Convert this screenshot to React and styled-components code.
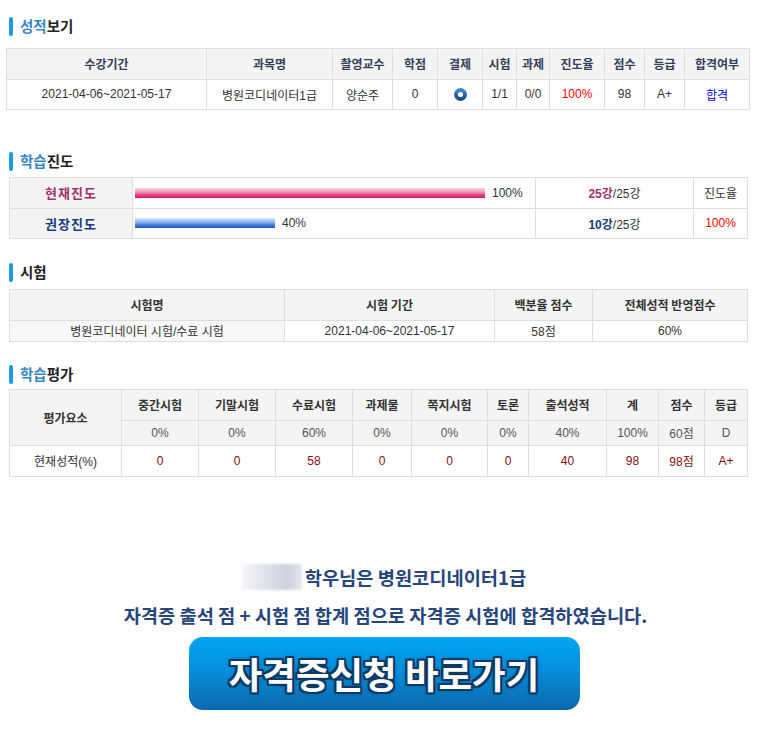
import styled, { createGlobalStyle } from "styled-components";

const GlobalStyle = createGlobalStyle`
    body {
        margin: 0;
        background: #fff;
        font-family: "Liberation Sans", "Noto Sans CJK KR", sans-serif;
        color: #333;
    }
`;

const Page = styled.div`
    width: 764px;
    padding-bottom: 29px;
`;

const Heading = styled.h3`
    display: flex;
    align-items: center;
    gap: 7px;
    height: 20px;
    margin: ${p => p.$mt}px 0 ${p => p.$mb}px 9px;
    font-family: "Noto Sans CJK KR", sans-serif;
    font-size: 14.5px;
    font-weight: bold;
    line-height: 20px;
    color: #222;

    &::before {
        content: "";
        width: 4px;
        height: 19px;
        border-radius: 2px;
        background: #1e9be6;
    }
`;

const Accent = styled.span`
    color: #3586c6;
`;

const Table = styled.table`
    border-collapse: collapse;
    table-layout: fixed;
    width: ${p => p.$w}px;
    margin-left: ${p => p.$ml}px;
    font-size: 12px;
`;

const Th = styled.th`
    height: ${p => p.$h || 29.5}px;
    padding: 0;
    border: 1px solid #dedede;
    background: #f4f4f4;
    font-family: "Noto Sans CJK KR", sans-serif;
    font-weight: bold;
    font-size: ${p => p.$size || 12}px;
    letter-spacing: ${p => p.$ls || 0}px;
    color: ${p => p.$color || "#333"};
    text-align: center;
`;

const Td = styled.td`
    height: ${p => p.$h || 29.5}px;
    padding: 0;
    border: 1px solid #dedede;
    background: ${p => p.$bg || "#fff"};
    color: ${p => p.$color || "#333"};
    text-align: center;
    white-space: nowrap;
`;

const Ring = () => (
    <svg width="13" height="13" viewBox="0 0 13 13" style={{ verticalAlign: "middle" }}>
        <defs>
            <linearGradient id="ring" x1="0" y1="0" x2="0" y2="1">
                <stop offset="0" stopColor="#3d86cf" />
                <stop offset="1" stopColor="#1a4b8c" />
            </linearGradient>
        </defs>
        <circle cx="6.5" cy="6.5" r="4.5" fill="#fff" stroke="url(#ring)" strokeWidth="4" />
    </svg>
);

const BarWrap = styled.div`
    display: flex;
    align-items: center;
    gap: 7px;
    padding-left: 2px;
`;

const Bar = styled.div`
    height: 10px;
    background: ${p => p.$kind === "pink"
        ? "linear-gradient(#fdd6df, #f294b5 40%, #e0347a 75%, #d81b6a)"
        : "linear-gradient(#dbe9fc, #8cb6ef 40%, #3f74dc 75%, #2556c9)"};
`;

const Lesson = styled.b`
    color: ${p => p.$color};
    font-weight: bold;
`;

const Notice = styled.div`
    display: flex;
    flex-direction: column;
    align-items: center;
    margin-top: 87px;
    padding-left: 4px;
    font-family: "Noto Sans CJK KR", sans-serif;
    font-weight: bold;
    font-size: 18.7px;
    color: #27467d;
`;

const NameLine = styled.div`
    display: flex;
    align-items: center;
    gap: 3px;
    height: 26px;
    line-height: 26px;
`;

const Masked = styled.span`
    width: 60px;
    height: 26px;
    background: linear-gradient(90deg, #f4f5f8, #d7dbe5 55%, #ccd1dd 75%, #e4e7ee);
    filter: blur(1px);
`;

const Message = styled.div`
    margin-top: 12px;
    padding-left: 3px;
    line-height: 26px;
`;

const ApplyButton = styled.a`
    display: flex;
    align-items: center;
    justify-content: center;
    width: 391px;
    height: 73px;
    margin-top: 9px;
    border-radius: 14px;
    background: linear-gradient(#00a4f5 0%, #0790dc 45%, #0b68ac 100%);
    color: #fff;
    font-size: 36.5px;
    font-weight: bold;
    text-decoration: none;
    cursor: pointer;
    text-shadow:
        2px 0 0 #0d3a64, -2px 0 0 #0d3a64, 0 2px 0 #0d3a64, 0 -2px 0 #0d3a64,
        2px 2px 0 #0d3a64, -2px -2px 0 #0d3a64, 2px -2px 0 #0d3a64, -2px 2px 0 #0d3a64,
        0 0 5px #0d3a64;
`;

const evalCols = [112, 77, 77, 77, 59, 76, 41, 78, 52, 46, 43];
const evalHeads = ["중간시험", "기말시험", "수료시험", "과제물", "쪽지시험", "토론", "출석성적", "계", "점수", "등급"];
const evalRates = ["0%", "0%", "60%", "0%", "0%", "0%", "40%", "100%", "60점", "D"];
const evalScores = ["0", "0", "58", "0", "0", "0", "40", "98", "98점", "A+"];

const Cols = ({ widths }) => (
    <colgroup>
        {widths.map((w, i) => <col key={i} style={{ width: w }} />)}
    </colgroup>
);

export default function App() {
    return (
        <Page>
            <GlobalStyle />

            <Heading $mt={16} $mb={12}><span><Accent>성적</Accent>보기</span></Heading>
            <Table $w={743} $ml={6}>
                <Cols widths={[200, 126, 60, 45, 45, 34, 33, 55, 40, 40, 65]} />
                <thead>
                    <tr>
                        {["수강기간", "과목명", "촬영교수", "학점", "결제", "시험", "과제", "진도율", "점수", "등급", "합격여부"].map(h => (
                            <Th key={h} $color="#34405a">{h}</Th>
                        ))}
                    </tr>
                </thead>
                <tbody>
                    <tr>
                        <Td>2021-04-06~2021-05-17</Td>
                        <Td>병원코디네이터1급</Td>
                        <Td>양순주</Td>
                        <Td>0</Td>
                        <Td><Ring /></Td>
                        <Td>1/1</Td>
                        <Td>0/0</Td>
                        <Td $color="#ff0000">100%</Td>
                        <Td>98</Td>
                        <Td>A+</Td>
                        <Td $color="#0000ff">합격</Td>
                    </tr>
                </tbody>
            </Table>

            <Heading $mt={41} $mb={6}><span><Accent>학습</Accent>진도</span></Heading>
            <Table $w={738} $ml={9}>
                <Cols widths={[123, 403, 158, 54]} />
                <tbody>
                    <tr>
                        <Th $size={13} $ls={1} $color="#a42f6b">현재진도</Th>
                        <Td>
                            <BarWrap>
                                <Bar $kind="pink" style={{ width: 350 }} />
                                <span>100%</span>
                            </BarWrap>
                        </Td>
                        <Td><Lesson $color="#a42f6b">25강</Lesson>/25강</Td>
                        <Td>진도율</Td>
                    </tr>
                    <tr>
                        <Th $size={13} $ls={1} $color="#173c7c">권장진도</Th>
                        <Td>
                            <BarWrap>
                                <Bar $kind="blue" style={{ width: 350 * 0.4 }} />
                                <span>40%</span>
                            </BarWrap>
                        </Td>
                        <Td><Lesson $color="#173c7c">10강</Lesson>/25강</Td>
                        <Td $color="#ff0000">100%</Td>
                    </tr>
                </tbody>
            </Table>

            <Heading $mt={23} $mb={7}><span>시험</span></Heading>
            <Table $w={738} $ml={9}>
                <Cols widths={[275, 210, 98, 155]} />
                <thead>
                    <tr>
                        <Th>시험명</Th>
                        <Th>시험 기간</Th>
                        <Th>백분율 점수</Th>
                        <Th>전체성적 반영점수</Th>
                    </tr>
                </thead>
                <tbody>
                    <tr>
                        <Td $h={20.5} $bg="#f7f7f7">병원코디네이터 시험/수료 시험</Td>
                        <Td $h={20.5}>2021-04-06~2021-05-17</Td>
                        <Td $h={20.5}>58점</Td>
                        <Td $h={20.5}>60%</Td>
                    </tr>
                </tbody>
            </Table>

            <Heading $mt={22} $mb={5}><span><Accent>학습</Accent>평가</span></Heading>
            <Table $w={738} $ml={9}>
                <Cols widths={evalCols} />
                <tbody>
                    <tr>
                        <Th rowSpan={2}>평가요소</Th>
                        {evalHeads.map(h => <Th key={h}>{h}</Th>)}
                    </tr>
                    <tr>
                        {evalRates.map((r, i) => <Td key={i} $h={24.5} $bg="#f4f4f4" $color="#555">{r}</Td>)}
                    </tr>
                    <tr>
                        <Td>현재성적(%)</Td>
                        {evalScores.map((s, i) => <Td key={i} $color="#850f0f">{s}</Td>)}
                    </tr>
                </tbody>
            </Table>

            <Notice>
                <NameLine>
                    <Masked />
                    <span>학우님은 병원코디네이터1급</span>
                </NameLine>
                <Message>자격증 출석 점 + 시험 점 합계 점으로 자격증 시험에 합격하였습니다.</Message>
                <ApplyButton>자격증신청 바로가기</ApplyButton>
            </Notice>
        </Page>
    );
}
